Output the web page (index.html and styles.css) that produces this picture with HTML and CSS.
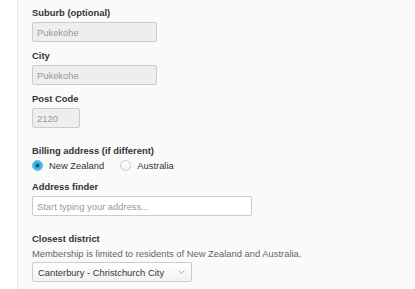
FILE: index.html
```html
<!DOCTYPE html>
<html lang="en">
<head>
    <meta charset="UTF-8">
    <title>Membership form</title>
    <link rel="stylesheet" href="styles.css">
</head>
<body>
    <div class="page">
        <div class="panel">
            <div class="field">
                <label class="field-label">Suburb (optional)</label>
                <input class="text-input readonly w-md" type="text" value="Pukekohe" readonly>
            </div>
            <div class="field">
                <label class="field-label">City</label>
                <input class="text-input readonly w-md" type="text" value="Pukekohe" readonly>
            </div>
            <div class="field">
                <label class="field-label">Post Code</label>
                <input class="text-input readonly w-sm" type="text" value="2120" readonly>
            </div>

            <div class="field billing">
                <label class="field-label">Billing address (if different)</label>
                <div class="radio-row">
                    <label class="radio"><span class="radio-dot checked"></span>New Zealand</label>
                    <label class="radio"><span class="radio-dot"></span>Australia</label>
                </div>
            </div>
            <div class="field">
                <label class="field-label">Address finder</label>
                <input class="text-input w-lg" type="text" placeholder="Start typing your address...">
            </div>

            <div class="field district">
                <label class="field-label">Closest district</label>
                <p class="help">Membership is limited to residents of New Zealand and Australia.</p>
                <div class="select">
                    <span>Canterbury - Christchurch City</span>
                    <svg class="chevron" width="7" height="4" viewBox="0 0 7 4"><path d="M0.5 0.5l3 3 3-3" fill="none" stroke="#adadad" stroke-width="1"/></svg>
                </div>
            </div>
        </div>
    </div>
</body>
</html>
```

FILE: styles.css
```css
body, html {
    margin: 0;
    padding: 0;
    background-color: #ffffff;
    font-family: "Liberation Sans", Arial, sans-serif;
    font-size: 9.4px;
    color: #333333;
}

.page {
    padding-left: 17px;
}

.panel {
    background-color: #fafafa;
    border-left: 1px solid #e8e8e8;
    min-height: 289px;
    padding: 7px 14px 0 14px;
}

.field {
    display: flex;
    flex-direction: column;
    align-items: flex-start;
    margin-bottom: 8px;
}

.field-label {
    font-weight: bold;
    color: #333333;
    line-height: 11px;
    margin-bottom: 4px;
}

.text-input {
    box-sizing: border-box;
    height: 20px;
    margin: 0;
    border: 1px solid #cccccc;
    border-radius: 2px;
    padding: 0 4px;
    font-family: inherit;
    font-size: 9.4px;
    color: #555555;
    background-color: #ffffff;
    outline: none;
}

.text-input::placeholder {
    color: #999999;
}

.readonly {
    background-color: #eeeeee;
    color: #999999;
}

.w-md { width: 125px; }
.w-sm { width: 48px; }
.w-lg { width: 220px; }

.billing {
    padding-top: 9px;
    margin-bottom: 9px;
}

.billing .field-label {
    margin-bottom: 3px;
}

.radio-row {
    display: flex;
    gap: 16px;
    line-height: 13px;
}

.radio {
    display: flex;
    align-items: center;
    gap: 6px;
    color: #333333;
}

.radio-dot {
    box-sizing: border-box;
    width: 11px;
    height: 11px;
    border-radius: 50%;
    border: 1px solid #c8c8c8;
    background: linear-gradient(#ffffff, #f3f3f3);
}

.radio-dot.checked {
    border-color: #5bbfea;
    background: #2aa6de;
    box-shadow: inset 0 0 0 1px #6cc8ee;
    position: relative;
}

.radio-dot.checked::after {
    content: "";
    position: absolute;
    left: 3px;
    top: 3px;
    width: 3px;
    height: 3px;
    border-radius: 50%;
    background-color: #1b3a4a;
}

.district {
    padding-top: 9px;
}

.help {
    margin: 0 0 2px 0;
    color: #666666;
    line-height: 12px;
}

.select {
    box-sizing: border-box;
    width: 160px;
    height: 20px;
    display: flex;
    align-items: center;
    justify-content: space-between;
    padding: 0 6px 0 5px;
    border: 1px solid #cccccc;
    border-radius: 2px;
    background: linear-gradient(#ffffff, #f2f2f2);
    color: #333333;
}
```
